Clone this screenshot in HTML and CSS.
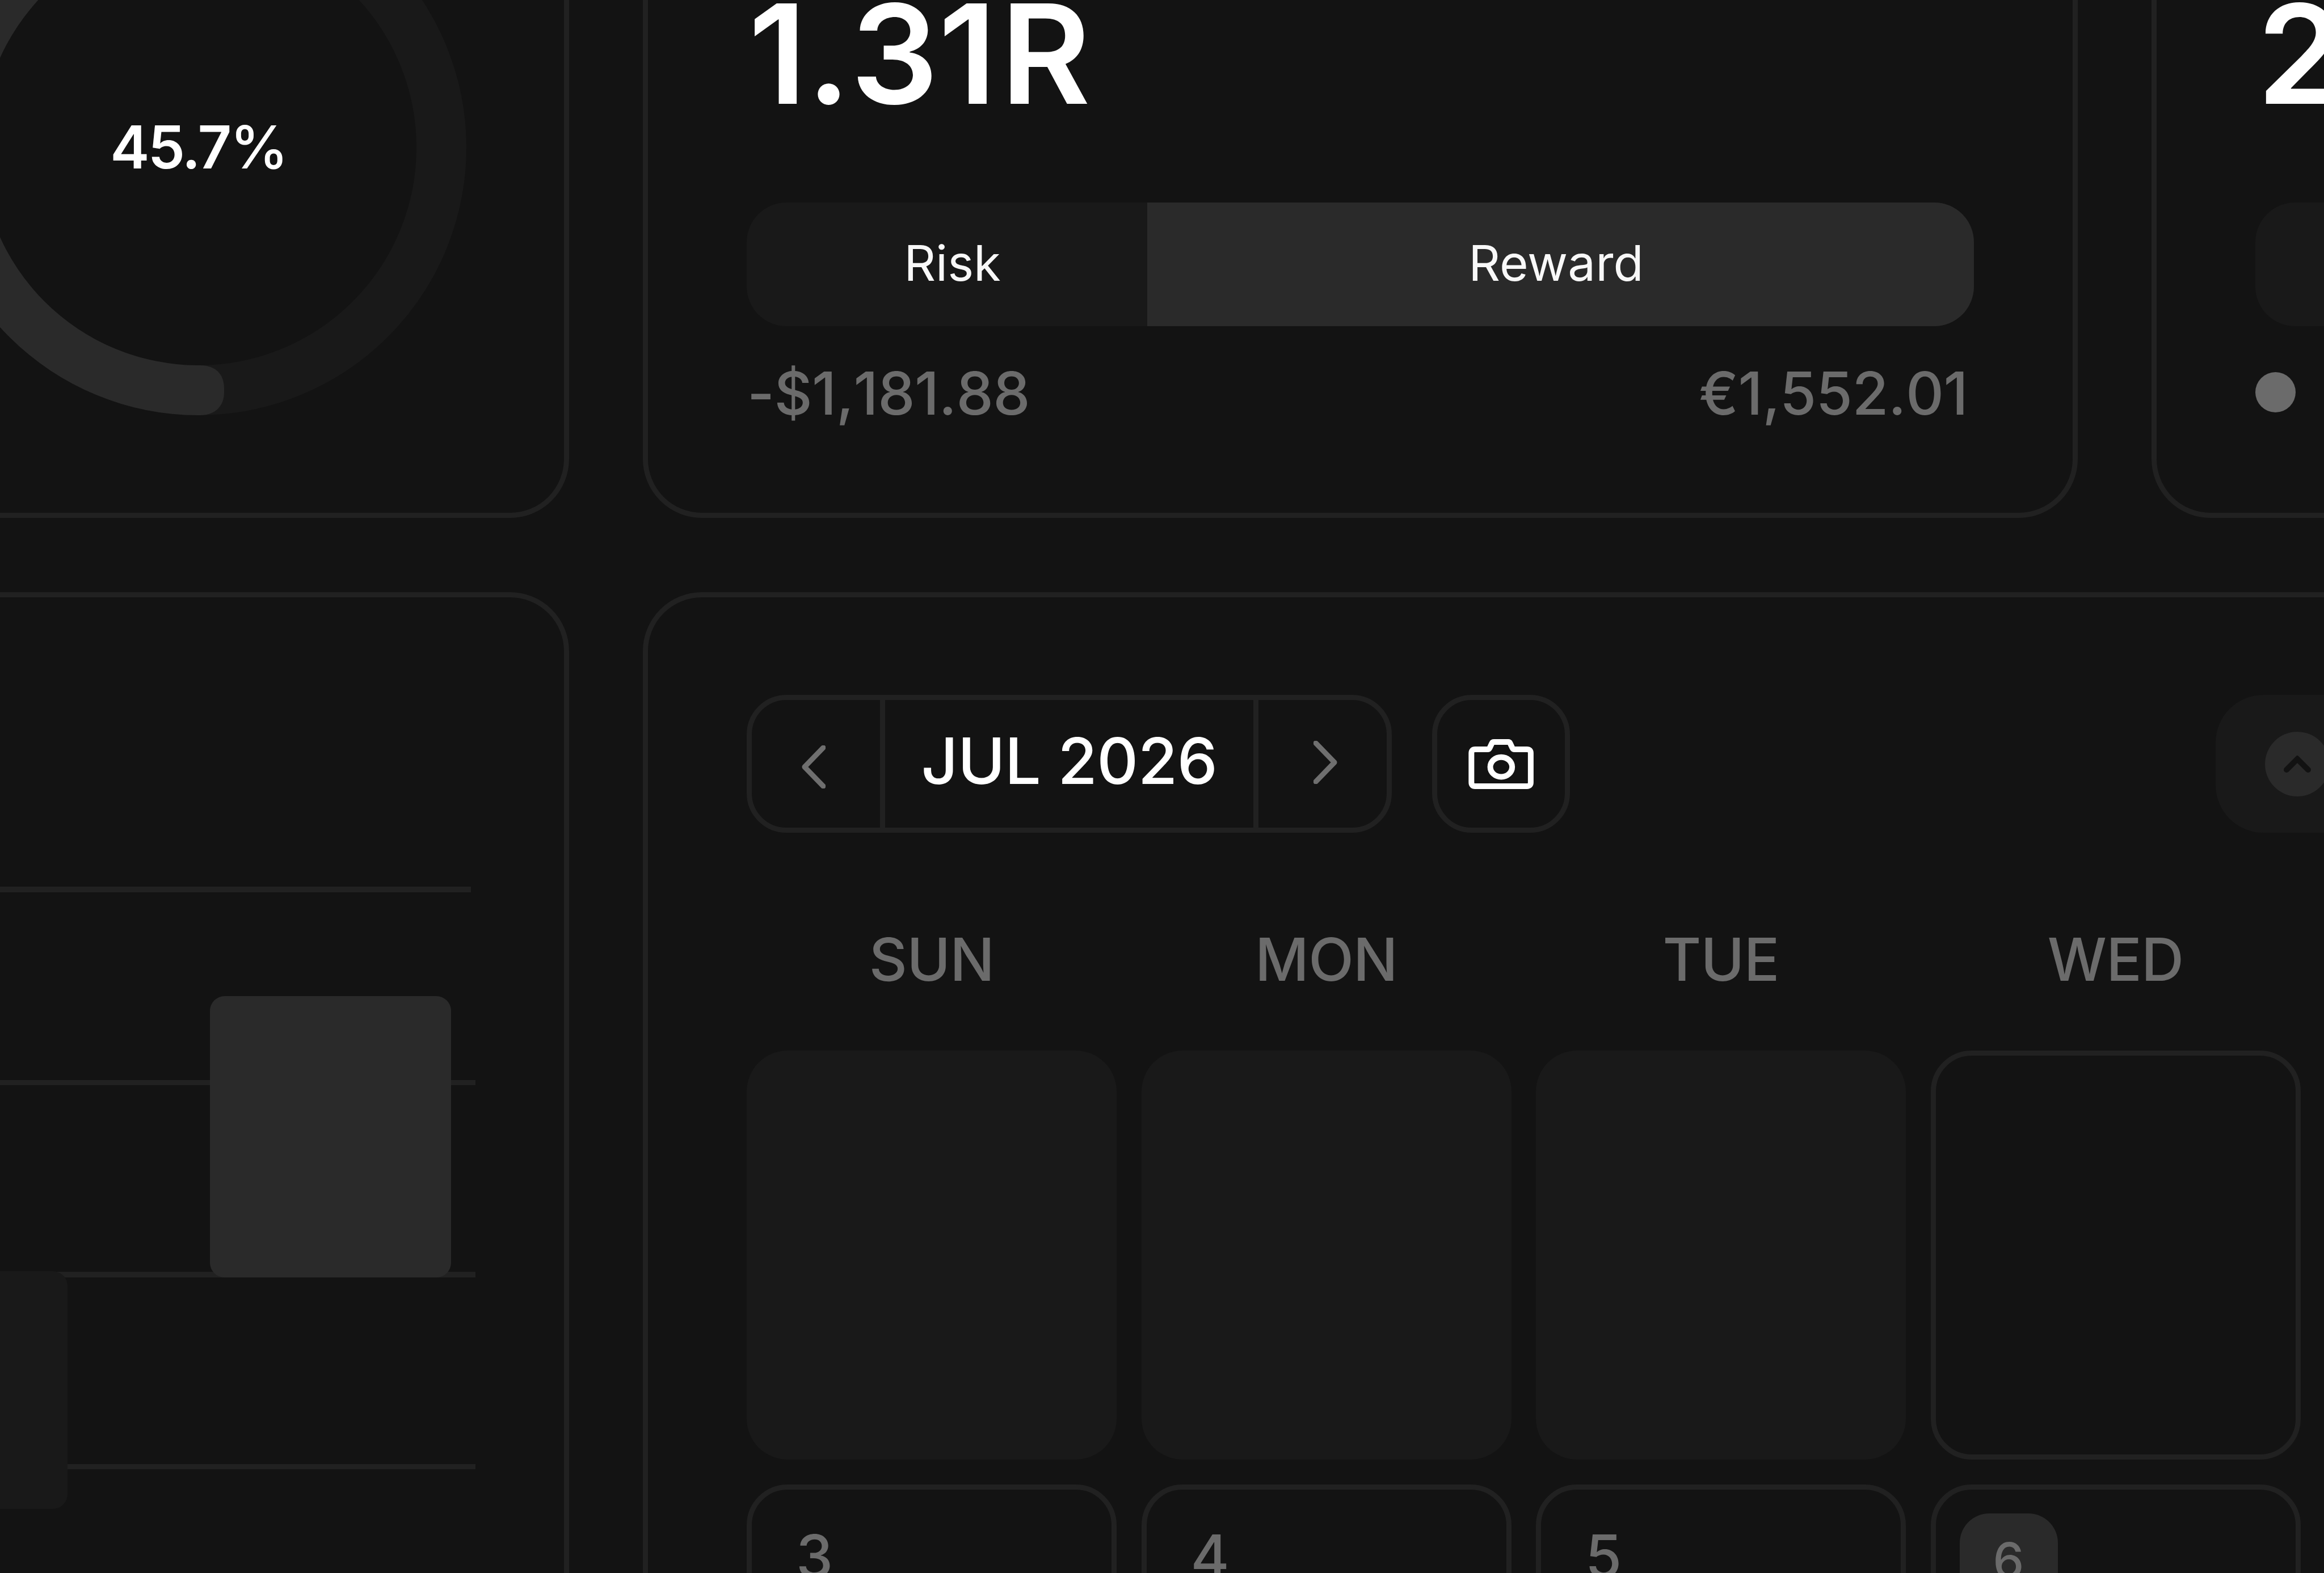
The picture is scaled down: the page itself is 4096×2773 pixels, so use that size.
FILE: index.html
```html
<!DOCTYPE html>
<html lang="en">
<head>
  <meta charset="UTF-8" />
  <meta name="viewport" content="width=device-width, initial-scale=1" />
  <title>Trading Dashboard</title>
  <link rel="stylesheet" href="styles.css">
</head>
<body>

  <div class="dashboard">

    <!-- Win rate -->
    <div class="card stat-card">
      <div class="donut">
        <svg width="944" height="944" viewBox="0 0 944 944">
          <circle class="donut-track" cx="472" cy="472" r="428" />
          <path class="donut-value" d="M472 0 A472 472 0 0 0 472 944 H475 C502 944 517 927 517 904 V896 C517 872 502 856 475 856 H472 A384 384 0 0 1 472 88 Z" />
        </svg>
        <div class="donut-label">45.7<span class="unit">%</span></div>
      </div>
    </div>

    <!-- Risk / reward -->
    <div class="card stat-card">
      <div class="stat-value">1.31<span class="suffix">R</span></div>
      <div class="split-bar">
        <div class="split risk">Risk</div>
        <div class="split reward">Reward</div>
      </div>
      <div class="stat-footer">
        <span class="loss">-$1,181.88</span>
        <span class="gain">€1,552.01</span>
      </div>
    </div>

    <div class="card stat-card">
      <div class="stat-value">2</div>
      <div class="split-bar"></div>
      <div class="stat-footer"><span class="dot"></span></div>
    </div>

    <!-- Bar chart -->
    <div class="card chart-card">
      <svg class="chart" width="2167" height="1500" viewBox="0 0 2167 1500">
        <rect class="grid-line" x="0" y="338" width="2173" height="10" />
        <rect class="grid-line" x="0" y="679" width="2181" height="9" />
        <rect class="grid-line" x="0" y="1017" width="2181" height="10" />
        <rect class="grid-line" x="0" y="1356" width="2181" height="9" />
        <rect class="bar-down" x="1037" y="1016" width="425" height="419" rx="26" />
        <rect class="bar-up" x="1713" y="531" width="425" height="496" rx="26" />
      </svg>
    </div>

    <!-- Calendar -->
    <div class="card calendar-card">
      <div class="toolbar">
        <div class="month-nav">
          <div class="nav-btn prev">
            <svg width="44" height="76" viewBox="0 0 44 76"><path d="M40 4 L7 38 L40 72" /></svg>
          </div>
          <div class="month">JUL 2026</div>
          <div class="nav-btn next">
            <svg width="44" height="76" viewBox="0 0 44 76"><path d="M4 4 L37 38 L4 72" /></svg>
          </div>
        </div>
        <div class="camera-btn">
          <svg width="115" height="88" viewBox="300 370 495 380" preserveAspectRatio="none">
            <path d="M351 448 H446 Q456 448 462 436 L478 402 Q483 392 494 392 H602 Q612 392 617 402 L633 436 Q639 448 650 448 H744 Q773 448 773 476 V699 Q773 728 744 728 H351 Q323 728 323 699 V476 Q323 448 351 448 Z" />
            <ellipse cx="549" cy="582" rx="83" ry="75" />
          </svg>
        </div>
        <div class="summary">
          <div class="summary-icon">
            <svg width="48" height="30" viewBox="0 0 48 30"><path d="M5 25 L24 6 L43 25" /></svg>
          </div>
        </div>
      </div>

      <div class="weekdays">
        <div>SUN</div>
        <div>MON</div>
        <div>TUE</div>
        <div>WED</div>
        <div>THU</div>
        <div>FRI</div>
        <div>SAT</div>
      </div>

      <div class="days">
        <div class="day empty"></div>
        <div class="day empty"></div>
        <div class="day empty"></div>
        <div class="day"></div>
        <div class="day"></div>
        <div class="day"></div>
        <div class="day"></div>
        <div class="day"><span class="num">3</span></div>
        <div class="day"><span class="num">4</span></div>
        <div class="day"><span class="num">5</span></div>
        <div class="day"><span class="num today">6</span></div>
        <div class="day"></div>
        <div class="day"></div>
        <div class="day"></div>
      </div>
    </div>

  </div>

</body>
</html>
```
FILE: styles.css
```css
* {
  box-sizing: border-box;
}

html, body {
  height: 100%;
}

body {
  margin: 0;
  background: #131313;
  color: #fff;
  font-family: Inter, "Liberation Sans", sans-serif;
  line-height: 0.7275;
  overflow: hidden;
}

.dashboard {
  display: grid;
  grid-template-columns: repeat(3, 2529px);
  grid-template-rows: 1200px 2400px;
  gap: 131px 130px;
  width: 7847px;
  margin: -287px 0 0 -1526px;
}

.card {
  border: 9px solid #212121;
  border-radius: 104px;
  padding: 172px 174px;
  min-width: 0;
}

.stat-card {
  display: flex;
  flex-direction: column;
  justify-content: flex-end;
}

/* === Donut === */
.donut {
  align-self: flex-end;
  display: grid;
  place-items: center;
  width: 944px;
  height: 944px;
  margin-right: -2px;
}

.donut svg,
.donut-label {
  grid-area: 1 / 1;
}

.donut-track {
  fill: none;
  stroke: #191919;
  stroke-width: 88;
}

.donut-value {
  fill: #2a2a2a;
}

.donut-label {
  font-size: 104px;
  font-weight: 600;
  letter-spacing: -3px;
}

.unit {
  font-weight: 500;
}

/* === Stats === */
.stat-value {
  font-size: 243px;
  font-weight: 600;
  font-kerning: none;
  padding-left: 3px;
  margin-bottom: 173px;
}

.suffix {
  margin-left: 7px;
}

.split-bar {
  display: flex;
  height: 218px;
  flex-shrink: 0;
  border-radius: 70px;
  background: #191919;
  overflow: hidden;
  margin-bottom: 81px;
}

.split {
  display: flex;
  align-items: center;
  justify-content: center;
  padding-bottom: 4px;
  font-size: 87px;
  color: #f8f8f8;
}

.risk {
  width: 706px;
  padding-left: 19px;
}

.reward {
  flex: 1;
  padding-right: 16px;
  background: #2a2a2a;
}

.stat-footer {
  display: flex;
  justify-content: space-between;
  height: 76px;
  font-size: 104px;
  font-weight: 500;
  font-kerning: none;
  letter-spacing: -0.6px;
  color: #6b6b6b;
}

.loss {
  padding-left: 1px;
}

.gain {
  padding-right: 11px;
}

.dot {
  width: 71px;
  height: 71px;
  border-radius: 50%;
  background: #6b6b6b;
}

/* === Chart === */
.chart {
  display: block;
  overflow: visible;
}

.grid-line {
  fill: #212121;
}

.bar-up {
  fill: #2a2a2a;
}

.bar-down {
  fill: #191919;
}

/* === Calendar === */
.calendar-card {
  grid-column: span 2;
}

.toolbar {
  display: flex;
  height: 243px;
  margin-bottom: 186px;
}

.month-nav {
  display: flex;
  width: 1137px;
  border: 9px solid #212121;
  border-radius: 70px;
}

.nav-btn {
  display: flex;
  align-items: center;
  justify-content: center;
  width: 226px;
}

.nav-btn svg {
  fill: none;
  stroke: #6f6f6f;
  stroke-width: 9;
  stroke-linecap: round;
  stroke-linejoin: round;
}

.prev {
  padding: 10px 10px 0 0;
}

.next {
  padding: 0 0 6px 12px;
}

.month {
  display: flex;
  align-items: center;
  justify-content: center;
  flex: 1;
  border: solid #212121;
  border-width: 0 9px;
  padding-bottom: 10px;
  font-size: 113px;
  font-weight: 500;
  letter-spacing: -0.5px;
}

.camera-btn {
  display: flex;
  align-items: center;
  justify-content: center;
  width: 243px;
  margin-left: 71px;
  border: 9px solid #212121;
  border-radius: 70px;
}

.camera-btn svg {
  fill: none;
  stroke: #fff;
  stroke-width: 43;
}

.summary {
  display: flex;
  align-items: center;
  width: 2233px;
  margin-left: auto;
  padding-left: 87px;
  border-radius: 84px;
  background: #191919;
}

.summary-icon {
  display: flex;
  align-items: center;
  justify-content: center;
  width: 114px;
  height: 114px;
  border-radius: 50%;
  background: #2a2a2a;
}

.summary-icon svg {
  fill: none;
  stroke: #121212;
  stroke-width: 10;
  stroke-linecap: round;
}

.weekdays,
.days {
  display: grid;
  grid-template-columns: repeat(7, 652px);
  gap: 44px 43.5px;
}

.weekdays {
  margin-bottom: 122px;
  font-size: 104px;
  font-weight: 500;
  letter-spacing: -0.8px;
  color: #6b6b6b;
  text-align: center;
}

.days {
  grid-auto-rows: 721px;
}

.day {
  border: 9px solid #212121;
  border-radius: 72px;
  padding: 42px;
}

.day.empty {
  border: none;
  background: #191919;
}

.num {
  display: block;
  padding: 38px 0 0 36px;
  font-size: 104px;
  font-weight: 500;
  color: #6b6b6b;
}

.num.today {
  display: flex;
  align-items: center;
  justify-content: center;
  width: 173px;
  height: 173px;
  padding: 0 0 8px;
  border-radius: 52px;
  background: #2a2a2a;
  font-size: 87px;
}
```
